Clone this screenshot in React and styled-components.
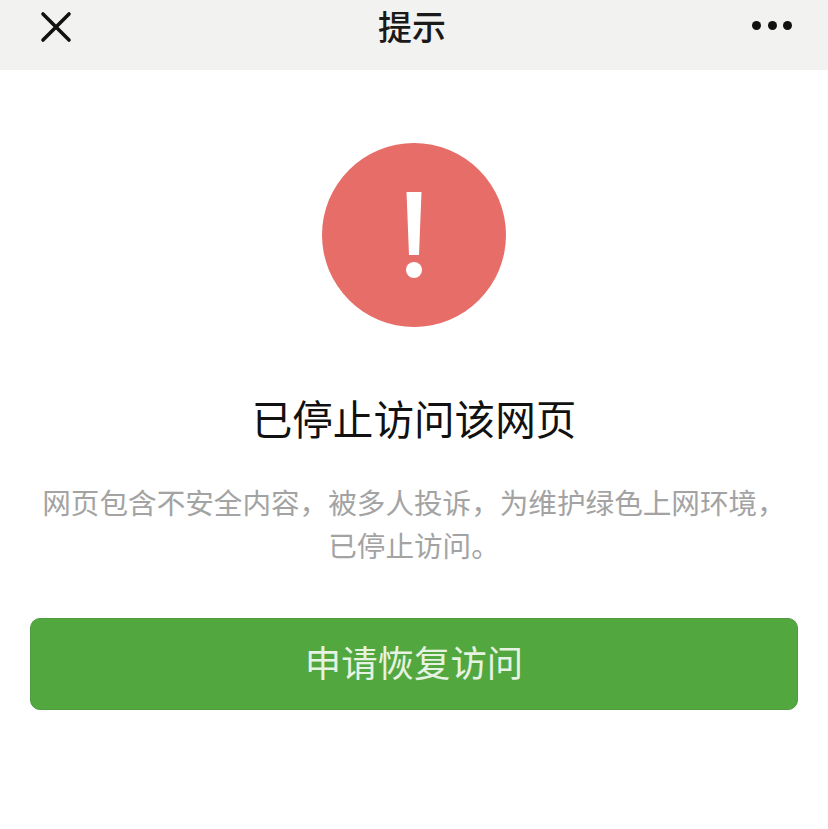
import React from 'react'
import styled, { createGlobalStyle } from 'styled-components'

const CJK = `'Noto Sans CJK SC', 'Liberation Sans', sans-serif`

const GlobalStyle = createGlobalStyle`
  html, body {
    margin: 0;
    padding: 0;
    background: #fff;
  }
`

const App = () => (
  <Page>
    <GlobalStyle />
    <Header>
      <HeaderIcon aria-label='关闭'>
        <svg width='32' height='32' viewBox='0 0 32 32' fill='none'>
          <path d='M3 3 L29 29 M29 3 L3 29' stroke='#111' strokeWidth='3.6' strokeLinecap='round' />
        </svg>
      </HeaderIcon>
      <HeaderTitle>提示</HeaderTitle>
      <HeaderMenu aria-label='更多'>
        <Dot />
        <Dot />
        <Dot />
      </HeaderMenu>
    </Header>
    <Main>
      <Warning>
        <svg width='184' height='184' viewBox='0 0 184 184'>
          <circle cx='92' cy='92' r='92' fill='#e66d68' />
          <path d='M84.5 49 H99.5 L97 112 H87 Z' fill='#fff' />
          <circle cx='92' cy='127' r='8' fill='#fff' />
        </svg>
      </Warning>
      <Title>已停止访问该网页</Title>
      <Description>
        网页包含不安全内容，被多人投诉，为维护绿色上网环境，
        <br />
        已停止访问。
      </Description>
      <RestoreButton>申请恢复访问</RestoreButton>
    </Main>
  </Page>
)

export default App

const Page = styled.div`
  width: 828px;
  height: 829px;
  overflow: hidden;
  background: #fff;
  font-family: ${CJK};
`
const Header = styled.header`
  height: 70px;
  background: #f2f2f1;
  display: flex;
  align-items: center;
  justify-content: space-between;
  padding: 0 36px 16px 40px;
  box-sizing: border-box;
`
const HeaderIcon = styled.div`
  width: 32px;
  height: 32px;
  display: flex;
`
const HeaderTitle = styled.h1`
  margin: 0 0 2px;
  font-size: 34px;
  line-height: 40px;
  font-weight: 500;
  color: #1a1a1a;
`
const HeaderMenu = styled.div`
  width: 40px;
  margin-bottom: 4px;
  display: flex;
  justify-content: space-between;
`
const Dot = styled.span`
  width: 9px;
  height: 9px;
  border-radius: 50%;
  background: #111;
`
const Main = styled.main`
  display: flex;
  flex-direction: column;
  align-items: center;
  padding: 73px 30px 0;
`
const Warning = styled.div`
  width: 184px;
  height: 184px;
  display: flex;
`
const Title = styled.h2`
  margin: 64px 0 0;
  font-size: 40.6px;
  line-height: 54px;
  font-weight: 400;
  color: #111;
`
const Description = styled.p`
  margin: 35px -20px 0;
  font-size: 28.6px;
  line-height: 43px;
  font-weight: 400;
  color: #a3a3a3;
  text-align: center;
  white-space: nowrap;
`
const RestoreButton = styled.button`
  margin-top: 52px;
  width: 768px;
  height: 92px;
  border: 1px solid #4f9a40;
  border-radius: 10px;
  background: #52a83e;
  color: #e6f2e2;
  font-family: inherit;
  font-size: 36.4px;
  font-weight: 400;
  padding: 0 0 6px;
`
